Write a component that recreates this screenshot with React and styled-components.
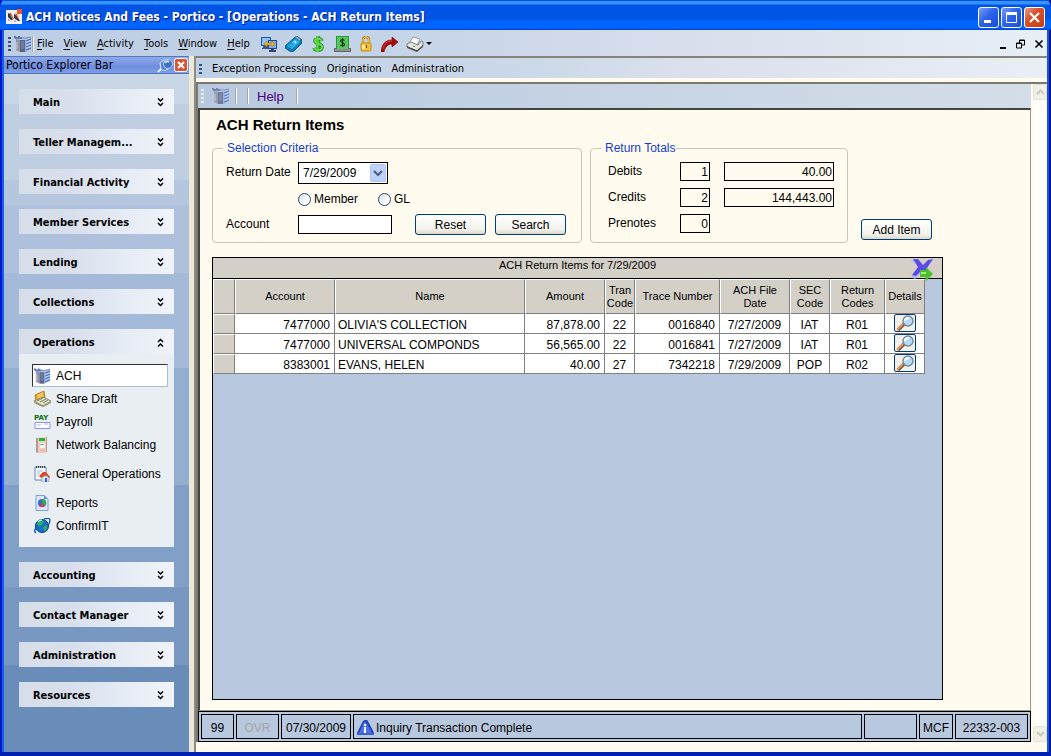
import styled, { createGlobalStyle, css } from "styled-components";

const GlobalStyle = createGlobalStyle`
  *, *::before, *::after {
    box-sizing: border-box;
  }
  body {
    margin: 0;
    font-family: "Liberation Sans", Arial, sans-serif;
    font-size: 12px;
    color: #000;
  }
  button, input, select {
    font: inherit;
    color: inherit;
  }
`;

const tahoma = css`
  font-family: "DejaVu Sans Condensed", "Noto Sans", sans-serif;
  font-size: 11px;
`;

// Window
const Window = styled.div`
  display: flex;
  flex-direction: column;
  height: 100vh;
  min-height: 700px;
  padding: 0 4px;
  border-bottom: 4px solid #0021b4;
  background: linear-gradient(90deg, #0019cf 0 2px, #1660e8 2px 4px, #0050e0 4px calc(100% - 4px), #1058e8 calc(100% - 4px) calc(100% - 2px), #00138c calc(100% - 2px));
`;

const TitleBar = styled.header`
  display: flex;
  align-items: center;
  gap: 4px;
  height: 30px;
  padding: 4px 2px 0 6px;
  margin: 0 -4px;
  border-radius: 7px 7px 0 0;
  background: linear-gradient(#0050d8 0 1px, #3593ff 1px 4px, #0054e3 5px 19px, #0065ff 21px 28px, #0040c8);
`;

const Title = styled.h1`
  flex: 1;
  margin: 0;
  font: bold 12px "DejaVu Sans Condensed", "Noto Sans", sans-serif;
  color: #fff;
  text-shadow: 1px 1px #0a1883;
  white-space: nowrap;
`;

const WindowButtons = styled.div`
  display: flex;
  gap: 2px;
  padding-right: 4px;
`;

const WindowButton = styled.button`
  display: grid;
  place-items: center;
  width: 21px;
  height: 21px;
  padding: 0;
  border: 1px solid #fff;
  border-radius: 3px;
  background: ${(props) =>
    props.$close
      ? "linear-gradient(135deg, #e9a186, #d8502a 40%, #c83c14)"
      : "linear-gradient(135deg, #7d9cf5, #2c63ea 45%, #1a50d8)"};
`;

const MenuBar = styled.nav`
  display: flex;
  align-items: center;
  height: 26px;
  padding: 2px 3px 0 4px;
  background: linear-gradient(90deg, #bdcde3, #c3d3e8 35%, #d9deec 65%, #e8eff5);
  ${tahoma}
`;

const Grip = styled.span`
  width: 3px;
  height: ${(props) => props.$height || 13}px;
  margin-right: ${(props) => props.$gap || 7}px;
  background: repeating-linear-gradient(${(props) => props.$color || "#31517b"} 0 2px, transparent 2px 4px);
`;

const Divider = styled.span`
  width: 2px;
  height: 16px;
  margin-left: ${(props) => props.$left || 0}px;
  border-left: 1px solid #a5a5a5;
  border-right: 1px solid #fff;
`;

const MenuButton = styled.button`
  padding: 0;
  border: 0;
  background: none;
  line-height: 16px;
  white-space: nowrap;
  u {
    text-underline-offset: 2px;
  }
`;

const Menus = styled.div`
  display: flex;
  gap: ${(props) => props.$gap}px;
  margin-left: ${(props) => props.$left || 0}px;
`;

const IconButton = styled.button`
  display: flex;
  align-items: center;
  padding: 0;
  border: 0;
  background: none;
`;

const ToolIcons = styled.div`
  display: flex;
  gap: 8px;
  margin-left: 11px;
`;

const ChildButtons = styled.div`
  display: flex;
  gap: 8px;
  margin-left: auto;
`;

const Workspace = styled.div`
  flex: 1;
  display: flex;
  min-height: 0;
  background: #ece9d8;
`;

// Left side
const Sidebar = styled.aside`
  display: flex;
  flex-direction: column;
  width: 185px;
  margin-right: 5px;
  background: linear-gradient(
    #c9d6e6 0 48px, #c0cee2 48px 124px, #b7c6df 124px 149px,
    #afc0dc 149px 217px, #a5bad8 217px 312px, #93aecf 312px 429px,
    #819fc7 429px 531px, #7898c2 531px 609px, #6a8cb9 609px
  );
`;

const SidebarTitle = styled.div`
  display: flex;
  align-items: center;
  height: 18px;
  padding: 0 1px 1px 2px;
  border-top: 1px solid #5578b8;
  border-bottom: 1px solid #4f74c4;
  background: linear-gradient(#8fa9ea, #6f8fdf 60%, #7f9ce4);
  h2 {
    flex: 1;
    margin: 0;
    font-weight: normal;
    ${tahoma}
    font-size: 12px;
  }
`;

const Groups = styled.div`
  display: flex;
  flex-direction: column;
  gap: 15px;
  padding: 15px 15px 0;
`;

const Group = styled.section`
  background: #e9eef3;
`;

const GroupHeader = styled.button`
  display: flex;
  align-items: center;
  justify-content: space-between;
  width: 100%;
  height: 25px;
  padding: 1px 10px 0 14px;
  border: 0;
  background: linear-gradient(90deg, #d5dee9, #d9dfec 35%, #e5ebf4 65%, #f0f3f9);
  ${tahoma}
  font-weight: bold;
`;

const GroupItems = styled.div`
  display: flex;
  flex-direction: column;
  padding: 10px 6px 10px 13px;
`;

const GroupItem = styled.a`
  display: flex;
  align-items: center;
  gap: 5px;
  height: 23px;
  padding-left: 1px;
  margin-bottom: ${(props) => (props.$spaced ? 6 : 0)}px;
  border: 1px solid transparent;
  color: #000;
  text-decoration: none;
  white-space: nowrap;
  ${(props) =>
    props.$active &&
    css`
      border-color: #333 #a9bdd6 #a9bdd6 #333;
      background: #fff;
    `}
`;

// Right side
const Main = styled.main`
  flex: 1;
  display: flex;
  flex-direction: column;
  min-width: 0;
  border-left: 2px solid #8d8b82;
  border-top: 2px solid #86847b;
  padding-bottom: 10px;
  background: #fffbef;
`;

const ModuleBar = styled.nav`
  display: flex;
  align-items: center;
  height: 20px;
  padding: 2px 0 0 3px;
  margin-bottom: 4px;
  background: linear-gradient(90deg, #bdcfe5, #ccd9e8 40%, #d9dfec 55%, #e9eff4);
  ${tahoma}
`;

const Child = styled.div`
  flex: 1;
  display: flex;
  min-height: 0;
  border-top: 2px solid #7a786f;
  border-left: 2px solid #7a786f;
`;

const ChildBody = styled.div`
  flex: 1;
  display: flex;
  flex-direction: column;
  min-width: 0;
`;

const ChildToolbar = styled.div`
  display: flex;
  align-items: center;
  height: 24px;
  padding-left: 3px;
  background: linear-gradient(90deg, #b8c9df, #c6d4e5 50%, #d4dee9);
`;

const HelpButton = styled(MenuButton)`
  margin: 1px 12px 0 8px;
  font-size: 13px;
  color: #4b007c;
`;

const Content = styled.div`
  flex: 1;
  display: flex;
  flex-direction: column;
  min-height: 0;
  padding: 6px 87px 10px 13px;
  border: 2px solid #45453f;
  border-width: 2px 1px 1px 2px;
  border-right-color: #9a988d;
  border-bottom-color: #9a988d;
`;

const PageTitle = styled.h2`
  margin: 0 0 6px 3px;
  font-size: 15px;
  line-height: 18px;
`;

const FormRow = styled.div`
  display: flex;
  gap: 8px;
  margin: 0 0 14px -1px;
`;

const Box = styled.fieldset`
  width: ${(props) => props.$width}px;
  min-width: 0;
  height: 103px;
  margin: 0;
  padding: 6px 10px 0;
  border: 1px solid #c9c7b4;
  border-radius: 4px;
`;

const Legend = styled.legend`
  padding: 0 1px 0 4px;
  line-height: 16px;
  color: #1440d0;
`;

const CriteriaGrid = styled.div`
  display: grid;
  grid-template-columns: 72px 1fr;
  grid-template-rows: 22px 30px 21px;
  align-items: center;
  padding-left: 3px;
`;

const FieldLabel = styled.label`
  padding-bottom: 2px;
`;

const FieldLine = styled.div`
  grid-column: 2;
  display: flex;
  align-items: center;
  gap: ${(props) => props.$gap}px;
`;

const SelectBox = styled.div`
  position: relative;
  width: 90px;
  svg {
    position: absolute;
    top: 2px;
    right: 2px;
    pointer-events: none;
  }
`;

const Select = styled.select`
  display: block;
  appearance: none;
  width: 100%;
  height: 22px;
  padding: 0 4px;
  border: 1px solid #000;
  border-radius: 0;
  background: #fff;
`;

const RadioLabel = styled.label`
  display: flex;
  align-items: center;
  gap: 3px;
`;

const Radio = styled.input`
  appearance: none;
  width: 13px;
  height: 13px;
  margin: 0;
  border: 1px solid #1c4878;
  border-radius: 50%;
  background: linear-gradient(135deg, #dcdcd4, #fff 70%);
  &:checked {
    background: radial-gradient(#2ba52b 0 3px, #fff 4px);
  }
`;

const TextBox = styled.input`
  width: ${(props) => props.$width}px;
  height: 19px;
  padding: 1px 1px 0 2px;
  border: 1px solid #000;
  border-radius: 0;
  background: ${(props) => (props.readOnly ? "#fffbef" : "#fff")};
  text-align: ${(props) => (props.readOnly ? "right" : "left")};
`;

const Button = styled.button`
  width: 71px;
  height: 21px;
  padding: 1px 0 0;
  border: 1px solid #003c74;
  border-radius: 3px;
  background: linear-gradient(#fff, #f3f2ec 75%, #dcd8cc);
`;

const FormButtons = styled.div`
  display: flex;
  gap: 9px;
  margin-left: 23px;
`;

const AddButton = styled(Button)`
  align-self: flex-end;
  margin: 0 0 3px 5px;
`;

const TotalsGrid = styled.div`
  display: grid;
  grid-template-columns: 72px 30px 1fr;
  grid-template-rows: repeat(3, 19px);
  row-gap: 7px;
  align-items: center;
  padding-left: 7px;
`;

const TotalAmount = styled(TextBox)`
  grid-column: 3;
  margin-left: 14px;
`;

const GridPanel = styled.section`
  flex: 1;
  display: flex;
  flex-direction: column;
  margin-left: -1px;
  border: 1px solid #000;
  background: #b8c8df;
`;

const GridCaption = styled.div`
  position: relative;
  height: 21px;
  border-bottom: 1px solid #000;
  background: #d4d0c8;
  font-size: 11px;
  line-height: 14px;
  text-align: center;
  h3 {
    margin: 0;
    font: inherit;
  }
`;

const ExportButton = styled(IconButton)`
  position: absolute;
  top: 0;
  right: 8px;
`;

const Table = styled.table`
  width: 712px;
  table-layout: fixed;
  border-collapse: separate;
  border-spacing: 0;
`;

const HeadCell = styled.th`
  height: 35px;
  padding: 0;
  border: 1px solid #fff;
  border-right-color: #808080;
  border-bottom-color: #808080;
  background: #d4d0c8;
  font-size: 11px;
  font-weight: normal;
  line-height: 13px;
`;

const Cell = styled.td`
  height: 20px;
  padding: 2px ${(props) => (props.$align === "center" ? 0 : 4)}px 0;
  padding-left: ${(props) => (props.$align === "left" ? 3 : 0)}px;
  border-right: 1px solid #808080;
  border-bottom: 1px solid #808080;
  background: #fff;
  line-height: 16px;
  text-align: ${(props) => props.$align};
  white-space: nowrap;
`;

const RowHead = styled(Cell)`
  border-top: 1px solid #fff;
  border-left: 1px solid #fff;
  background: #d4d0c8;
`;

const DetailsCell = styled(Cell)`
  padding: 0;
  line-height: 0;
  vertical-align: top;
`;

const DetailsButton = styled.button`
  display: inline-grid;
  place-items: center;
  width: 22px;
  height: 18px;
  padding: 0;
  border: 1px solid #003c74;
  border-radius: 2px;
  background: #f2f0ea;
`;

const StatusBar = styled.footer`
  display: flex;
  gap: 2px;
  height: 31px;
  padding: 2px;
  border: 1px solid #000;
  background: #b8c8df;
`;

const StatusCell = styled.div`
  flex: ${(props) => (props.$grow ? "1" : "none")};
  display: flex;
  align-items: center;
  justify-content: ${(props) => (props.$grow ? "flex-start" : "center")};
  gap: 2px;
  width: ${(props) => (props.$width ? `${props.$width}px` : "auto")};
  padding: 2px 3px 0;
  border: 1px solid #000;
  color: ${(props) => (props.$dim ? "#a3a7a8" : "#000")};
  white-space: nowrap;
`;

const ScrollBar = styled.div`
  display: flex;
  flex-direction: column;
  justify-content: space-between;
  width: 14px;
  margin-left: 2px;
  background: #fefdf9;
`;

const ScrollButton = styled.button`
  display: grid;
  place-items: center;
  height: 16px;
  padding: 0;
  border: 1px solid #e4e2d4;
  border-radius: 2px;
  background: #f1efe6;
`;

// Icons
const AppIcon = () => (
  <svg width="16" height="16" viewBox="0 0 16 16">
    <path d="M0 1h16v14H0z" fill="#f4efe9" />
    <path d="M11 0h5v5h-5z" fill="#f0562c" />
    <path d="M2 4l2 1 3 6H5L2 8zM8 5l2 1 4 6h-2L8 9z" fill="#30364c" />
    <path d="M3 4l2 0 3 6H7zM9 4l2 1 2 5h-1z" fill="#e0532e" />
    <path d="M2 9l2 3H2zM9 10l1 3H8z" fill="#9fa2b2" />
  </svg>
);

const ServerIcon = ({ size = 18, dim }) => (
  <svg width={size} height="16" viewBox="0 0 18 16" opacity={dim ? 0.8 : 1}>
    <path d="M2 2h7l8-1v12l-6 3H6l-4-2z" fill="#b9c6e2" />
    <path d="M2 3l4 1v12l-4-2z" fill="#8d94ac" />
    <path d="M6 4h5v12H6z" fill="#5b6684" />
    <path d="M11 4l6-2v11l-6 3z" fill="#8fade4" />
    <path d="M0 0h2v1h2v-1h2v1h2v2H1V2H0z" fill="#5a78ae" />
    <path d="M7 6h3M7 8h3M7 10h3M7 12h3" stroke="#8591b0" />
    <path d="M12 5l5-2M12 8l5-2M12 11l5-2M12 14l5-2" stroke="#4468b0" />
    <path d="M12 6.500l5-2M12 9.500l5-2M12 12.500l5-2" stroke="#d5e2fa" strokeWidth=".8" />
    <path d="M3 6v7" stroke="#d6d0cc" />
    <path d="M8 2h4l5-1" fill="none" stroke="#7186b4" />
  </svg>
);

const MonitorsIcon = () => (
  <svg width="16" height="16" viewBox="0 0 16 16">
    <path d="M0 1h10v9H0z" fill="#2454a4" />
    <path d="M1 2h8v7H1z" fill="#8cc4f6" />
    <path d="M2 10h5v3H1v-1h1z" fill="#45527a" />
    <path d="M7 4h9v9H7z" fill="#1d4698" />
    <path d="M8 5h7v7H8z" fill="#79b4f1" />
    <path d="M10 13h3v1h2v2H8v-2h2z" fill="#36446d" />
    <path d="M3 8l3-3v2h5V5l3 3-3 3V9H6v2z" fill="#f4ad18" stroke="#a76a08" strokeWidth=".5" />
  </svg>
);

const TagIcon = () => (
  <svg width="17" height="16" viewBox="0 0 17 16">
    <path d="M9 2l3-2 5 4v3l-8 8-3 1-6-4v-2z" fill="#087cbc" stroke="#07517f" strokeWidth=".8" />
    <path d="M10 3l5 3-8 7-5-3z" fill="#2ab5e8" />
    <path d="M11 1l4 3" stroke="#a5a9ad" strokeWidth="1.600" />
    <path d="M9 5l2 2" stroke="#d9f6ff" strokeWidth="1.400" />
    <path d="M4 9l3 3M6 7l3 3" stroke="#075c92" strokeDasharray="1 1" />
  </svg>
);

const DollarIcon = () => (
  <svg width="16" height="16" viewBox="0 0 14 16">
    <path d="M11 5c-1-3-7-3-7 0s7 2 7 6-7 4-8 1M7 0v16" fill="none" stroke="#2c8a2b" strokeWidth="3.600" />
    <path d="M11 5c-1-3-7-3-7 0s7 2 7 6-7 4-8 1M6.500 0v16" fill="none" stroke="#5cdb45" strokeWidth="2" />
  </svg>
);

const CashIcon = () => (
  <svg width="17" height="16" viewBox="0 0 17 16">
    <path d="M2 0h13v13H2z" fill="#289b38" />
    <path d="M3 1h11v12H3z" fill="#5ac45e" />
    <path d="M10.500 4.500c-1-1.500-4-1-4 .5s4 1.500 4 3.500-3.500 1.500-4.200.3M8.500 2v9" fill="none" stroke="#103d18" strokeWidth="1.200" />
    <path d="M0 12h2v1h13v-1h2v4H0z" fill="#666" />
    <path d="M1 14h15" stroke="#bbb" />
  </svg>
);

const LockIcon = () => (
  <svg width="14" height="16" viewBox="-1 0 14 16">
    <path d="M3 8V4c0-4 6-4 6 0v4" fill="none" stroke="#b37d0b" strokeWidth="2.400" />
    <path d="M3 8V4c0-4 6-4 6 0v4" fill="none" stroke="#ffe28a" />
    <rect x="1" y="7" width="10" height="8" rx="1" fill="#f4bf32" stroke="#c58d18" />
    <path d="M2 9h3v4H2z" fill="#ffeb9f" />
    <path d="M6 9h1v3H6z" fill="#6b4604" />
  </svg>
);

const ArrowIcon = () => (
  <svg width="17" height="16" viewBox="0 0 17 16">
    <path d="M11 1l6 5-6 5V8C7 8 4 11 3 16H0C1 8 4 4 11 4z" fill="#a90b0b" stroke="#6d0505" strokeWidth=".6" />
    <path d="M2 13c1-5 4-8 9-8" fill="none" stroke="#d1432f" />
  </svg>
);

const PrinterIcon = () => (
  <svg width="18" height="16" viewBox="0 0 18 16">
    <path d="M7 1l7 2-3 6-7-3z" fill="#fff" stroke="#777" strokeWidth=".7" />
    <path d="M1 8l4-2 7 3 3-4 2 1v4l-6 5-10-4z" fill="#e3e3df" stroke="#555" strokeWidth=".7" />
    <path d="M1 10l10 4v2L1 12zM11 14l6-5v2l-6 5z" fill="#555" />
    <path d="M3 10l7 3" stroke="#fff" />
    <path d="M7 10h2v1H7z" fill="#2daf36" />
  </svg>
);

const PinIcon = () => (
  <svg width="17" height="16" viewBox="0 0 17 16">
    <path d="M5 11l-4 4" stroke="#e8f1ff" strokeWidth="2" />
    <path d="M3 6c2-2 4-3 6-3l3 8c-3 3-6 3-8 1z" fill="#5585d2" stroke="#d8e7fd" />
    <circle cx="11" cy="7" r="4.500" fill="#3f72c7" stroke="#bdd5f7" />
    <path d="M8 6c1-2 3-2 4-1" fill="none" stroke="#fff" strokeWidth="1.500" />
  </svg>
);

const SmallCloseIcon = () => (
  <svg width="14" height="14" viewBox="0 0 14 14">
    <rect x=".5" y=".5" width="13" height="13" rx="2" fill="#d95534" stroke="#fff" />
    <path d="M4 4l6 6M10 4l-6 6" stroke="#fff" strokeWidth="2" />
  </svg>
);

const Chevrons = ({ up }) => (
  <svg width="7" height="9" viewBox="0 0 7 9" transform={up ? "rotate(180)" : undefined}>
    <path d="M1 0.500l2.500 2.500L6 .5M1 5l2.500 2.500L6 5" fill="none" stroke="#000" strokeWidth="1.500" />
  </svg>
);

const CheckStackIcon = () => (
  <svg width="17" height="16" viewBox="0 0 17 16">
    <path d="M1 4l9-4 1 7-9 3z" fill="#e9a71e" stroke="#8f6209" strokeWidth=".7" />
    <path d="M3 4l6-3v5L4 8z" fill="#f6c65a" />
    <path d="M0 10l9-4 8 4-8 5z" fill="#e8dfc4" stroke="#7d735a" strokeWidth=".8" />
    <path d="M3 10l6-3M6 11l6-3M9 12l5-3" stroke="#6c8660" />
    <path d="M0 11l9 4 8-4v1l-8 4-9-4z" fill="#8a8064" />
  </svg>
);

const PayIcon = () => (
  <svg width="17" height="16" viewBox="0 0 17 16">
    <text x="0" y="6" fontSize="7" fontWeight="bold" fontFamily="DejaVu Sans, sans-serif" fill="#0d6c18">PAY</text>
    <path d="M1 8.500h15v6H1z" fill="#fff" stroke="#8f8ff0" />
    <path d="M3 11h4M10 10h4" stroke="#b6b6dc" />
  </svg>
);

const BalanceIcon = () => (
  <svg width="17" height="16" viewBox="0 0 17 16">
    <path d="M2 1l11-1v15l-1 1H3l-1-1z" fill="#eccdc0" />
    <path d="M2 1h2v15l-2-1z" fill="#b29a8b" />
    <path d="M5 1h6v3H5z" fill="#23b63c" />
    <path d="M6 6h5v5H6z" fill="#fbf1ed" />
    <path d="M6 7.500h4" stroke="#7f9fd0" />
    <path d="M6 13.500h5" stroke="#f3a8a0" />
    <path d="M12 0h1v15h-1z" fill="#c09d8b" />
  </svg>
);

const HomeDocIcon = () => (
  <svg width="17" height="16" viewBox="0 0 17 16">
    <path d="M1 1h11v13H1z" fill="#f7fbff" stroke="#5f86b6" />
    <path d="M2 1h9" stroke="#444" strokeDasharray="1 1" strokeWidth="2" />
    <path d="M3 5h6M3 7h3M3 9h2" stroke="#9fc0dd" />
    <path d="M8 10h7v6H8z" fill="#dbe6f5" stroke="#6f8fbe" strokeWidth=".6" />
    <path d="M5 10l4-4h3l4 5-1 1-3-3-5 3z" fill="#de4922" />
    <path d="M11 12h2v4h-2z" fill="#3565b4" />
  </svg>
);

const ReportIcon = () => (
  <svg width="17" height="16" viewBox="0 0 17 16">
    <path d="M2 .5h8l4 4v11H2z" fill="#dbe9fb" stroke="#7c9fd0" />
    <path d="M10 0v4h4z" fill="#6b91cb" />
    <circle cx="8" cy="8" r="4" fill="#3469cf" />
    <path d="M8 8V4a4 4 0 0 1 3 7z" fill="#2eae3d" />
    <path d="M8 8l3 3a4 4 0 0 1-6 0z" fill="#cb3a73" />
  </svg>
);

const GlobeIcon = () => (
  <svg width="17" height="16" viewBox="0 0 17 16">
    <circle cx="8" cy="8" r="6.500" fill="#1270d4" stroke="#083c86" />
    <path d="M3 6c2-4 5-4 7-3L8 7l-3 1zM9 9l4-2c1 3-1 5-3 6z" fill="#36b14a" />
    <path d="M4 4c1-2 3-2 4-2" stroke="#9fe6ff" fill="none" strokeWidth="1.500" />
    <path d="M2 15c-3-2 0-5 1-6M10 1c3-1 6-1 6 1s-1 4-2 5" fill="none" stroke="#0b55a9" strokeWidth="1.300" />
  </svg>
);

const ExportIcon = () => (
  <svg width="24" height="23" viewBox="0 0 24 23">
    <path d="M0 3l5-2 4 9-3 3-5 6 4 2 6-6-3-9z" fill="#b4bdf3" />
    <path d="M3 1h5l5 6 5-5 5-1-6 9 4 7h-6l-4-4-5 5-4-1 6-8z" fill="#5b4be8" />
    <path d="M10 12h6v-3l7 7-7 7v-4h-6z" fill="#4cc02c" />
    <path d="M11 14h5v2h-5z" fill="#a2ef73" />
  </svg>
);

const SearchIcon = () => (
  <svg width="20" height="16" viewBox="0 0 20 16">
    <path d="M9 9l-6 6" stroke="#6a5a50" strokeWidth="3.400" />
    <path d="M8 9l-6 6" stroke="#ef9350" strokeWidth="2" />
    <circle cx="13" cy="6" r="5" fill="#b4dcf8" stroke="#78889c" strokeWidth="1.400" />
    <path d="M10 6c0-2 2-3 4-3" fill="none" stroke="#fff" strokeWidth="2" />
  </svg>
);

const InfoIcon = () => (
  <svg width="17" height="16" viewBox="0 0 17 16">
    <path d="M6 1l2-1h2l2 3 5 10v2H0v-2z" fill="#1d3fbf" />
    <path d="M7 2h2l6 11H2z" fill="#4b72e4" />
    <path d="M7 4h2v2H7zM7 7h2v6H7z" fill="#fff" />
    <path d="M0 13h17v2H0z" fill="#3c5fd6" />
  </svg>
);

const DropIcon = () => (
  <svg width="16" height="18" viewBox="0 0 16 18">
    <rect x=".5" y=".5" width="15" height="17" rx="1" fill="#bfd2fb" stroke="#afc4f5" />
    <path d="M4 7l4 4 4-4" fill="none" stroke="#4d6185" strokeWidth="2.200" />
  </svg>
);

const ScrollArrow = ({ down }) => (
  <svg width="9" height="6" viewBox="0 0 9 6">
    <path d={down ? "M1 1l3.500 3.500L8 1" : "M1 5l3.500-3.500L8 5"} fill="none" stroke="#c4ccc0" strokeWidth="2" />
  </svg>
);

const menus = ["File", "View", "Activity", "Tools", "Window", "Help"];

const tools = [
  ["Terminals", MonitorsIcon],
  ["Tag", TagIcon],
  ["Cash", DollarIcon],
  ["Cash drawer", CashIcon],
  ["Lock", LockIcon],
  ["Forward", ArrowIcon],
];

const groupsTop = [
  "Main",
  "Teller Managem...",
  "Financial Activity",
  "Member Services",
  "Lending",
  "Collections",
];

const groupsBottom = ["Accounting", "Contact Manager", "Administration", "Resources"];

const operations = [
  { name: "ACH", Icon: ServerIcon, active: true },
  { name: "Share Draft", Icon: CheckStackIcon },
  { name: "Payroll", Icon: PayIcon },
  { name: "Network Balancing", Icon: BalanceIcon, spaced: true },
  { name: "General Operations", Icon: HomeDocIcon, spaced: true },
  { name: "Reports", Icon: ReportIcon },
  { name: "ConfirmIT", Icon: GlobeIcon },
];

const totals = [
  { name: "Debits", count: "1", amount: "40.00" },
  { name: "Credits", count: "2", amount: "144,443.00" },
  { name: "Prenotes", count: "0" },
];

const columns = [
  { title: "Account", width: 100, align: "right" },
  { title: "Name", width: 190, align: "left" },
  { title: "Amount", width: 80, align: "right" },
  { title: "Tran Code", width: 30, align: "center" },
  { title: "Trace Number", width: 85, align: "right" },
  { title: "ACH File Date", width: 70, align: "center" },
  { title: "SEC Code", width: 40, align: "center" },
  { title: "Return Codes", width: 55, align: "center" },
];

const items = [
  ["7477000", "OLIVIA'S COLLECTION", "87,878.00", "22", "0016840", "7/27/2009", "IAT", "R01"],
  ["7477000", "UNIVERSAL COMPONDS", "56,565.00", "22", "0016841", "7/27/2009", "IAT", "R01"],
  ["8383001", "EVANS, HELEN", "40.00", "27", "7342218", "7/29/2009", "POP", "R02"],
];

const ClosedGroup = ({ name }) => (
  <Group>
    <GroupHeader aria-expanded="false">
      {name}
      <Chevrons />
    </GroupHeader>
  </Group>
);

const ExplorerBar = () => (
  <Sidebar>
    <SidebarTitle>
      <h2>Portico Explorer Bar</h2>
      <IconButton aria-label="Pin">
        <PinIcon />
      </IconButton>
      <IconButton aria-label="Close explorer bar">
        <SmallCloseIcon />
      </IconButton>
    </SidebarTitle>
    <Groups>
      {groupsTop.map((name) => (
        <ClosedGroup key={name} name={name} />
      ))}
      <Group>
        <GroupHeader aria-expanded="true">
          Operations
          <Chevrons up />
        </GroupHeader>
        <GroupItems>
          {operations.map(({ name, Icon, active, spaced }) => (
            <GroupItem key={name} href="#" $active={active} $spaced={spaced}>
              <Icon size={17} />
              {name}
            </GroupItem>
          ))}
        </GroupItems>
      </Group>
      {groupsBottom.map((name) => (
        <ClosedGroup key={name} name={name} />
      ))}
    </Groups>
  </Sidebar>
);

const SelectionCriteria = () => (
  <Box $width={370}>
    <Legend>Selection Criteria</Legend>
    <CriteriaGrid>
      <FieldLabel htmlFor="date">Return Date</FieldLabel>
      <SelectBox>
        <Select id="date">
          <option>7/29/2009</option>
        </Select>
        <DropIcon />
      </SelectBox>
      <FieldLine $gap={20}>
        <RadioLabel>
          <Radio type="radio" name="kind" />
          Member
        </RadioLabel>
        <RadioLabel>
          <Radio type="radio" name="kind" />
          GL
        </RadioLabel>
      </FieldLine>
      <FieldLabel htmlFor="account">Account</FieldLabel>
      <FieldLine>
        <TextBox id="account" $width={94} />
        <FormButtons>
          <Button>Reset</Button>
          <Button>Search</Button>
        </FormButtons>
      </FieldLine>
    </CriteriaGrid>
  </Box>
);

const TotalLine = ({ name, count, amount }) => (
  <>
    <FieldLabel htmlFor={name}>{name}</FieldLabel>
    <TextBox id={name} readOnly value={count} $width={30} />
    {amount ? (
      <TotalAmount aria-label={`${name} amount`} readOnly value={amount} $width={110} />
    ) : (
      <span />
    )}
  </>
);

const ReturnTotals = () => (
  <Box $width={258}>
    <Legend>Return Totals</Legend>
    <TotalsGrid>
      {totals.map((line) => (
        <TotalLine key={line.name} {...line} />
      ))}
    </TotalsGrid>
  </Box>
);

const ReturnItems = () => (
  <GridPanel>
    <GridCaption>
      <h3 id="items-title">ACH Return Items for 7/29/2009</h3>
      <ExportButton aria-label="Export">
        <ExportIcon />
      </ExportButton>
    </GridCaption>
    <Table aria-labelledby="items-title">
      <colgroup>
        <col width="22" />
        {columns.map(({ title, width }) => (
          <col key={title} width={width} />
        ))}
        <col width="40" />
      </colgroup>
      <thead>
        <tr>
          <HeadCell aria-label="Row" />
          {columns.map(({ title }) => (
            <HeadCell key={title}>{title}</HeadCell>
          ))}
          <HeadCell>Details</HeadCell>
        </tr>
      </thead>
      <tbody>
        {items.map((item) => (
          <tr key={item[4]}>
            <RowHead />
            {item.map((value, i) => (
              <Cell key={columns[i].title} $align={columns[i].align}>
                {value}
              </Cell>
            ))}
            <DetailsCell $align="center">
              <DetailsButton aria-label={`Details for ${item[1]}`}>
                <SearchIcon />
              </DetailsButton>
            </DetailsCell>
          </tr>
        ))}
      </tbody>
    </Table>
  </GridPanel>
);

const App = () => {
  return (
    <>
      <GlobalStyle />
      <Window>
        <TitleBar>
          <AppIcon />
          <Title>ACH Notices And Fees - Portico - [Operations - ACH Return Items]</Title>
          <WindowButtons>
            <WindowButton aria-label="Minimize">
              <svg width="13" height="13">
                <path d="M2 9h7v3H2z" fill="#fff" />
              </svg>
            </WindowButton>
            <WindowButton aria-label="Maximize">
              <svg width="13" height="13">
                <path d="M1.500 2v9.500h10V2" fill="none" stroke="#fff" />
                <path d="M1 1h11v3H1z" fill="#fff" />
              </svg>
            </WindowButton>
            <WindowButton aria-label="Close" $close>
              <svg width="13" height="13">
                <path d="M2 2l9 9M11 2l-9 9" stroke="#fff" strokeWidth="2.200" />
              </svg>
            </WindowButton>
          </WindowButtons>
        </TitleBar>
        <MenuBar>
          <Grip $height={14} $gap={3} />
          <ServerIcon />
          <Divider />
          <Menus $gap={10} $left={3}>
            {menus.map((name) => (
              <MenuButton key={name}>
                <u>{name[0]}</u>
                {name.slice(1)}
              </MenuButton>
            ))}
          </Menus>
          <ToolIcons>
            {tools.map(([name, Icon]) => (
              <IconButton key={name} aria-label={name}>
                <Icon />
              </IconButton>
            ))}
            <IconButton aria-label="Print">
              <PrinterIcon />
              <svg width="8" height="4">
                <path d="M2 0h6L5 3z" />
              </svg>
            </IconButton>
          </ToolIcons>
          <ChildButtons>
            <IconButton aria-label="Minimize form">
              <svg width="10" height="10">
                <path d="M2 8h6v2H2z" />
              </svg>
            </IconButton>
            <IconButton aria-label="Restore form">
              <svg width="10" height="10">
                <path d="M3.500 4V1h5v5H6M3 1.500h6M.5 4h5v5h-5zM0 4.500h6" fill="none" stroke="#000" />
              </svg>
            </IconButton>
            <IconButton aria-label="Close form">
              <svg width="10" height="10">
                <path d="M1.500 1.500l7 7M8.500 1.500l-7 7" stroke="#000" strokeWidth="1.600" />
              </svg>
            </IconButton>
          </ChildButtons>
        </MenuBar>
        <Workspace>
          <ExplorerBar />
          <Main>
            <ModuleBar>
              <Grip $height={10} $gap={10} />
              <Menus $gap={10}>
                <MenuButton>Exception Processing</MenuButton>
                <MenuButton>Origination</MenuButton>
                <MenuButton>Administration</MenuButton>
              </Menus>
            </ModuleBar>
            <Child>
              <ChildBody>
                <ChildToolbar>
                  <Grip $height={14} $gap={8} $color="#ecebe2" />
                  <ServerIcon dim />
                  <Divider $left={5} />
                  <Divider $left={10} />
                  <HelpButton>Help</HelpButton>
                  <Divider />
                </ChildToolbar>
                <Content>
                  <PageTitle>ACH Return Items</PageTitle>
                  <FormRow>
                    <SelectionCriteria />
                    <ReturnTotals />
                    <AddButton>Add Item</AddButton>
                  </FormRow>
                  <ReturnItems />
                </Content>
                <StatusBar>
                  <StatusCell $width={33}>99</StatusCell>
                  <StatusCell $width={43} $dim>OVR</StatusCell>
                  <StatusCell $width={70}>07/30/2009</StatusCell>
                  <StatusCell $grow>
                    <InfoIcon />
                    Inquiry Transaction Complete
                  </StatusCell>
                  <StatusCell $width={53} />
                  <StatusCell $width={34}>MCF</StatusCell>
                  <StatusCell $width={73}>22332-003</StatusCell>
                </StatusBar>
              </ChildBody>
              <ScrollBar>
                <ScrollButton aria-label="Scroll up">
                  <ScrollArrow />
                </ScrollButton>
                <ScrollButton aria-label="Scroll down">
                  <ScrollArrow down />
                </ScrollButton>
              </ScrollBar>
            </Child>
          </Main>
        </Workspace>
      </Window>
    </>
  );
};

export default App;
